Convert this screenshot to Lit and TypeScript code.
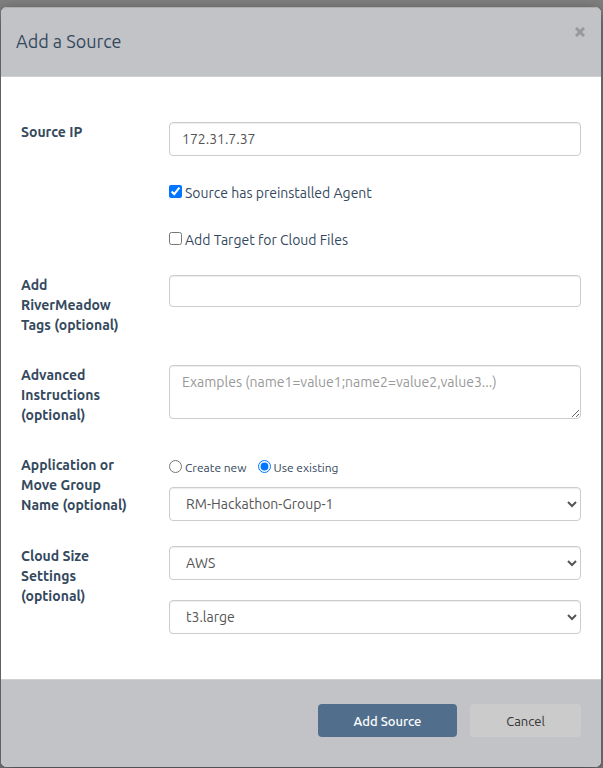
import { LitElement, html, css } from "lit";
import { customElement, state } from "lit/decorators.js";

@customElement("app-root")
export class AppRoot extends LitElement {
  @state() private groupMode: "new" | "existing" = "existing";

  static styles = css`
    :host {
      display: block;
      box-sizing: border-box;
      min-height: 100vh;
      padding: 7px 2px 1px 1px;
      background: #808080;
      color: #34495e;
      font-family: Ubuntu, "Noto Sans", sans-serif;
      font-size: 14px;
      line-height: 20px;
    }
    * {
      box-sizing: border-box;
    }
    .modal {
      border-radius: 6px;
      background: #fff;
      box-shadow: 0 5px 15px rgba(0, 0, 0, 0.5);
    }
    .header,
    .footer {
      display: flex;
      background: #c2c3c7;
    }
    .header {
      justify-content: space-between;
      align-items: flex-start;
      min-height: 70px;
      padding: 14px 15px;
      border-top: 1px solid #acadaf;
      border-bottom: 1px solid #d0d0d3;
      border-radius: 6px 6px 0 0;
    }
    .title {
      margin: 0;
      padding-top: 7px;
      font-size: 18px;
      line-height: 24px;
      font-weight: 400;
    }
    .close {
      display: flex;
      padding: 5px 1px;
      border: 0;
      background: none;
      color: #97989b;
    }
    .body {
      padding: 45px 20px;
    }
    .row {
      display: grid;
      grid-template-columns: 112px minmax(0, 1fr);
      column-gap: 36px;
      margin-bottom: 30px;
    }
    .row.tight {
      margin-bottom: 25px;
    }
    .row:last-child {
      margin-bottom: 0;
    }
    .label {
      font-weight: 700;
    }
    .fields {
      display: flex;
      flex-direction: column;
    }
    .fields.spaced {
      gap: 20px;
    }
    .fields.checks {
      gap: 27px;
    }
    .control {
      display: block;
      width: 100%;
      height: 34px;
      margin: 0;
      padding: 6px 12px;
      border: 1px solid #ccc;
      border-radius: 4px;
      background-color: #fff;
      box-shadow: inset 0 1px 1px rgba(0, 0, 0, 0.075);
      color: #555;
      font: inherit;
    }
    .control::placeholder {
      color: #999;
      opacity: 1;
    }
    .control.tags {
      height: 32px;
    }
    textarea.control {
      height: 54px;
    }
    .option {
      display: flex;
      align-items: center;
      gap: 3px;
    }
    .option input {
      width: 13px;
      height: 13px;
      margin: 0 0 3px;
    }
    .radios {
      display: flex;
      gap: 11px;
      margin-bottom: 9px;
      padding-top: 3px;
      font-size: 12px;
    }
    .footer {
      justify-content: flex-end;
      gap: 13px;
      padding: 24px 20px 30px;
      border-top: 1px solid #d0d0d3;
      border-radius: 0 0 6px 6px;
    }
    .button {
      height: 33px;
      padding: 0;
      border: 0;
      border-radius: 4px;
      font: inherit;
      font-size: 13px;
    }
    .primary {
      width: 139px;
      background: #516f8c;
      color: #fff;
      font-weight: 500;
    }
    .secondary {
      width: 111px;
      background: #cbcbcb;
      color: #333;
    }
  `;

  render() {
    return html`
      <form class="modal" role="dialog" aria-labelledby="title" @submit=${(e: Event) => e.preventDefault()}>
        <header class="header">
          <h1 class="title" id="title">Add a Source</h1>
          <button class="close" type="button" aria-label="Close">
            <svg width="10" height="10" viewBox="0 0 10 10" stroke="currentColor" stroke-width="3">
              <path d="M1 1l8 8M9 1l-8 8" />
            </svg>
          </button>
        </header>
        <div class="body">
          <div class="row tight">
            <label class="label" for="ip">Source IP</label>
            <div class="fields checks">
              <input class="control" id="ip" type="text" value="172.31.7.37" />
              <label class="option"><input type="checkbox" checked />Source has preinstalled Agent</label>
              <label class="option"><input type="checkbox" />Add Target for Cloud Files</label>
            </div>
          </div>
          <div class="row">
            <label class="label" for="tags">Add RiverMeadow Tags (optional)</label>
            <div class="fields"><input class="control tags" id="tags" type="text" /></div>
          </div>
          <div class="row">
            <label class="label" for="advanced">Advanced Instructions (optional)</label>
            <div class="fields">
              <textarea class="control" id="advanced" placeholder="Examples (name1=value1;name2=value2,value3...)"></textarea>
            </div>
          </div>
          <div class="row tight">
            <label class="label" for="group">Application or Move Group Name (optional)</label>
            <div class="fields">
              <div class="radios">
                <label class="option">
                  <input type="radio" name="mode" .checked=${this.groupMode === "new"} @change=${() => (this.groupMode = "new")} />Create new
                </label>
                <label class="option">
                  <input type="radio" name="mode" .checked=${this.groupMode === "existing"} @change=${() => (this.groupMode = "existing")} />Use existing
                </label>
              </div>
              <select class="control" id="group"><option>RM-Hackathon-Group-1</option></select>
            </div>
          </div>
          <div class="row">
            <label class="label" for="cloud">Cloud Size Settings (optional)</label>
            <div class="fields spaced">
              <select class="control" id="cloud"><option>AWS</option></select>
              <select class="control" aria-label="Instance size"><option>t3.large</option></select>
            </div>
          </div>
        </div>
        <footer class="footer">
          <button class="button primary" type="submit">Add Source</button>
          <button class="button secondary" type="button">Cancel</button>
        </footer>
      </form>
    `;
  }
}
